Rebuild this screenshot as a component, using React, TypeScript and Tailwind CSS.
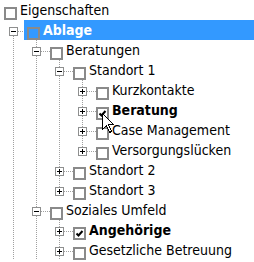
import React from "react";

type Row = {
  level: number;
  label: string;
  exp: "+" | "-" | null;
  checked?: boolean;
  bold?: boolean;
  selected?: boolean;
  hasNext: boolean;
  noTop?: boolean;
};

const rows: Row[] = [
  { level: 0, label: "Eigenschaften", exp: null, hasNext: false },
  { level: 1, label: "Ablage", exp: "-", selected: true, bold: true, hasNext: true, noTop: true },
  { level: 2, label: "Beratungen", exp: "-", hasNext: true },
  { level: 3, label: "Standort 1", exp: "-", hasNext: true },
  { level: 4, label: "Kurzkontakte", exp: "+", hasNext: true },
  { level: 4, label: "Beratung", exp: "+", checked: true, bold: true, hasNext: true },
  { level: 4, label: "Case Management", exp: "+", hasNext: true },
  { level: 4, label: "Versorgungslücken", exp: "+", hasNext: false },
  { level: 3, label: "Standort 2", exp: "+", hasNext: true },
  { level: 3, label: "Standort 3", exp: "+", hasNext: false },
  { level: 2, label: "Soziales Umfeld", exp: "-", hasNext: true },
  { level: 3, label: "Angehörige", exp: "+", checked: true, bold: true, hasNext: true },
  { level: 3, label: "Gesetzliche Betreuung", exp: "+", hasNext: true },
];

const LINE = "#a0a0a0";

function AncestorCell({ line }: { line: boolean }) {
  return (
    <svg width="23" height="20" className="shrink-0 block" shapeRendering="crispEdges">
      {line && (
        <line x1="13.5" y1="0" x2="13.5" y2="20" stroke={LINE} strokeWidth="1" strokeDasharray="1 1" />
      )}
    </svg>
  );
}

function OwnCell({ row }: { row: Row }) {
  return (
    <svg width="27" height="20" className="shrink-0 block" shapeRendering="crispEdges">
      {!row.noTop && (
        <line x1="13.5" y1="0" x2="13.5" y2="7" stroke={LINE} strokeWidth="1" strokeDasharray="1 1" />
      )}
      {row.hasNext && (
        <line x1="13.5" y1="16" x2="13.5" y2="20" stroke={LINE} strokeWidth="1" strokeDasharray="1 1" />
      )}
      <line x1="18" y1="11.5" x2="27" y2="11.5" stroke={LINE} strokeWidth="1" strokeDasharray="1 1" />
      <rect x="9.5" y="7.5" width="8" height="8" fill="#ffffff" stroke="#8e8f8f" strokeWidth="1" />
      <line x1="11" y1="11.5" x2="16" y2="11.5" stroke="#000000" strokeWidth="1" />
      {row.exp === "+" && (
        <line x1="13.5" y1="9" x2="13.5" y2="14" stroke="#000000" strokeWidth="1" />
      )}
    </svg>
  );
}

function CheckBox({ checked }: { checked?: boolean }) {
  return (
    <svg width="13" height="13" className="shrink-0 block mt-[7px]">
      <rect x="1" y="1" width="11" height="11" fill="none" stroke="#8a8a8a" strokeWidth="2" />
      {checked && (
        <path d="M3.5 6.5 L5.5 8.5 L9.5 4" fill="none" stroke="#000000" strokeWidth="2" />
      )}
    </svg>
  );
}

export default function App() {
  const lastAtLevel: Record<number, Row> = {};
  return (
    <div
      className="relative w-[254px] h-[262px] overflow-hidden bg-white text-black"
      style={{ fontFamily: '"DejaVu Sans Condensed", "DejaVu Sans", "Liberation Sans", sans-serif' }}
    >
      <div className="flex flex-col">
        {rows.map((row, i) => {
          const ancestors: boolean[] = [];
          for (let k = 1; k < row.level; k++) {
            ancestors.push(lastAtLevel[k] ? lastAtLevel[k].hasNext : false);
          }
          lastAtLevel[row.level] = row;
          return (
            <div key={i} className="flex h-5 items-start">
              {row.level === 0 && <div className="w-1 shrink-0" />}
              {ancestors.map((a, j) => (
                <AncestorCell key={j} line={a} />
              ))}
              {row.level > 0 && <OwnCell row={row} />}
              <div
                className={
                  row.selected
                    ? "flex flex-1 h-5 items-start -ml-[3px] pl-[3px] bg-[#3399ff]"
                    : "flex flex-1 h-5 items-start"
                }
              >
                <CheckBox checked={row.checked} />
                <span
                  className={
                    "ml-[3px] whitespace-nowrap text-[14px] leading-[20px] font-stretch-condensed " +
                    (row.bold ? "font-bold " : "") +
                    (row.selected ? "text-white" : "text-black")
                  }
                >
                  {row.label}
                </span>
              </div>
            </div>
          );
        })}
      </div>
      <svg
        width="13"
        height="21"
        className="absolute left-[102px] top-[113px]"
        shapeRendering="crispEdges"
      >
        <path
          d="M0.5 0.5 L0.5 16.5 L4.5 12.5 L7.5 19.5 L9.5 18.5 L6.5 11.5 L11.5 11.5 Z"
          fill="#ffffff"
          stroke="#000000"
          strokeWidth="1"
        />
      </svg>
    </div>
  );
}
